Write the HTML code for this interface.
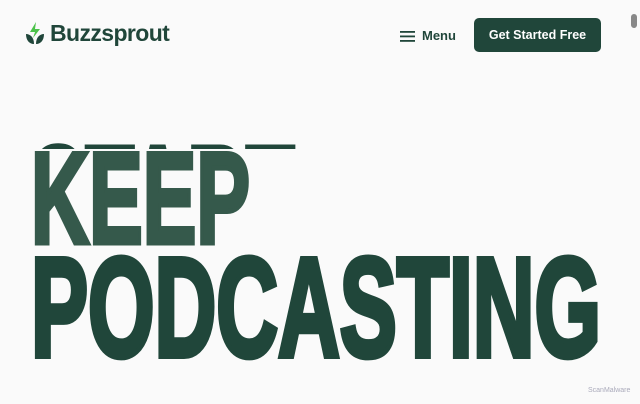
<!DOCTYPE html>
<html><head><style>
html,body{margin:0;padding:0;width:640px;height:404px;overflow:hidden;background:#fafafa;font-family:"Liberation Sans",sans-serif;}
.logo{position:absolute;left:50px;top:20px;font-weight:bold;font-size:23px;color:#20463a;letter-spacing:-0.6px;}
.menu{position:absolute;left:422px;top:28px;font-weight:bold;font-size:13px;color:#20463a;}
.btn{position:absolute;left:474px;top:18px;width:127px;height:34px;background:#20463a;border-radius:5px;color:#fff;font-size:12.5px;font-weight:bold;text-align:center;line-height:34px;}
.sb{position:absolute;right:3px;top:14px;width:6px;height:14px;border-radius:3px;background:#888;}
</style></head><body>
<svg style="position:absolute;left:25px;top:22px" width="20" height="25" viewBox="0 0 20 25">
<path d="M11 0 L5 10 H10 L8 16 L15 7 H10 Z" fill="#4cc24a"/>
<path d="M1 12 C5 12 9 15 9 22 C4 22 1 18 1 12 Z" fill="#20463a"/>
<path d="M19 12 C15 12 11 15 11 22 C16 22 19 18 19 12 Z" fill="#20463a"/>
</svg>
<div class="logo">Buzzsprout</div>
<svg style="position:absolute;left:400px;top:30px" width="16" height="13"><rect y="1" width="15" height="1.8" fill="#20463a"/><rect y="5.5" width="15" height="1.8" fill="#20463a"/><rect y="10" width="15" height="1.8" fill="#20463a"/></svg>
<div class="menu">Menu</div>
<div class="btn">Get Started Free</div>
<div class="sb"></div>
<svg style="position:absolute;left:0;top:0" width="640" height="404">
<defs><clipPath id="c"><rect x="0" y="140" width="640" height="9"/></clipPath></defs>
<text clip-path="url(#c)" x="31" y="236" font-family="Liberation Sans" font-weight="bold" font-size="130" fill="#20463a" stroke="#20463a" stroke-width="4" textLength="264" lengthAdjust="spacingAndGlyphs">START</text>
<text x="31" y="243" font-family="Liberation Sans" font-weight="bold" font-size="130" fill="#35594b" stroke="#35594b" stroke-width="5" stroke-linejoin="miter" textLength="219" lengthAdjust="spacingAndGlyphs">KEEP</text>
<text x="31" y="356" font-family="Liberation Sans" font-weight="bold" font-size="141" fill="#20463a" stroke="#20463a" stroke-width="6" stroke-linejoin="miter" textLength="570" lengthAdjust="spacingAndGlyphs">PODCASTING</text>
<text x="588" y="392" font-family="Liberation Sans" font-size="7" fill="#aab">ScanMalware</text>
</svg>
</body></html>
